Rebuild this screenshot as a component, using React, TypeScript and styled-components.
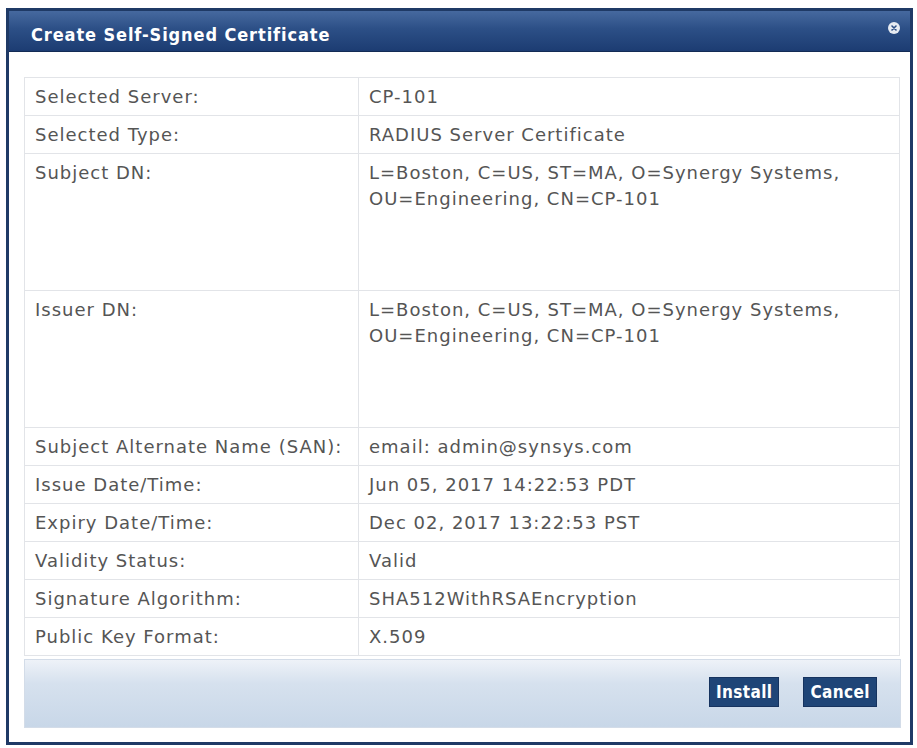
import React from 'react';
import styled, {createGlobalStyle} from 'styled-components';

const GlobalStyle = createGlobalStyle`
    html, body {
        margin: 0;
        padding: 0;
        background: #ffffff;
    }
    body {
        font-family: "DejaVu Sans", Verdana, sans-serif;
    }
`;

const Page = styled.div`
    padding: 8px 4px 0 6px;
`;

const Dialog = styled.div`
    display: flex;
    flex-direction: column;
    width: 907px;
    height: 737px;
    box-sizing: border-box;
    border: 3px solid #1f3a66;
    background: #ffffff;
`;

const Header = styled.div`
    display: flex;
    align-items: center;
    justify-content: space-between;
    height: 41px;
    padding: 0 10px 0 22px;
    background: linear-gradient(to bottom, #46699f 0%, #2c4f86 45%, #1c3c72 100%);
    border-bottom: 1px solid #132b55;
`;

const Title = styled.div`
    font-family: "DejaVu Sans Condensed", "DejaVu Sans", sans-serif;
    font-weight: bold;
    font-size: 18px;
    letter-spacing: 0.9px;
    color: #ffffff;
    margin-top: 6px;
`;

const CloseButton = styled.div`
    width: 12px;
    height: 12px;
    border-radius: 50%;
    background: #e6ebf2;
    display: flex;
    align-items: center;
    justify-content: center;
    align-self: flex-start;
    margin-top: 11px;
`;

const Body = styled.div`
    display: flex;
    flex-direction: column;
    flex: 1;
    padding: 25px 10px 14px 15px;
`;

const Table = styled.table`
    width: 876px;
    border-collapse: collapse;
    table-layout: fixed;
`;

const Cell = styled.td<{tall?: boolean}>`
    border: 1px solid #e2e4e8;
    padding: ${p => p.tall ? '6px 10px' : '0 10px'};
    height: ${p => p.tall ? '124px' : '37px'};
    vertical-align: ${p => p.tall ? 'top' : 'middle'};
    font-size: 18px;
    letter-spacing: 1px;
    line-height: 26px;
    color: #555555;
`;

const LabelCell = styled(Cell)`
    width: 321px;
    padding-right: 2px;
    white-space: nowrap;
`;

const Footer = styled.div`
    display: flex;
    justify-content: flex-end;
    align-items: center;
    gap: 24px;
    height: 69px;
    margin-top: 3px;
    width: 877px;
    box-sizing: border-box;
    padding: 0 23px 3px 0;
    background: linear-gradient(to bottom, #eef2f8 0%, #d6e1ee 35%, #c8d7e8 100%);
    border: 1px solid #d3dce8;
`;

const Button = styled.button`
    height: 30px;
    padding: 0 6px;
    border: 1px solid #16335f;
    background: #1f4577;
    color: #ffffff;
    font-family: "DejaVu Sans Condensed", "DejaVu Sans", sans-serif;
    font-weight: bold;
    font-size: 17px;
    letter-spacing: 0.4px;
    cursor: pointer;
`;

const rows: {label: string; value: string; tall?: boolean}[] = [
    {label: 'Selected Server:', value: 'CP-101'},
    {label: 'Selected Type:', value: 'RADIUS Server Certificate'},
    {label: 'Subject DN:', value: 'L=Boston, C=US, ST=MA, O=Synergy Systems, OU=Engineering, CN=CP-101', tall: true},
    {label: 'Issuer DN:', value: 'L=Boston, C=US, ST=MA, O=Synergy Systems, OU=Engineering, CN=CP-101', tall: true},
    {label: 'Subject Alternate Name (SAN):', value: 'email: admin@synsys.com'},
    {label: 'Issue Date/Time:', value: 'Jun 05, 2017 14:22:53 PDT'},
    {label: 'Expiry Date/Time:', value: 'Dec 02, 2017 13:22:53 PST'},
    {label: 'Validity Status:', value: 'Valid'},
    {label: 'Signature Algorithm:', value: 'SHA512WithRSAEncryption'},
    {label: 'Public Key Format:', value: 'X.509'},
];

export default function App() {
    return (
        <Page>
            <GlobalStyle/>
            <Dialog>
                <Header>
                    <Title>Create Self-Signed Certificate</Title>
                    <CloseButton>
                        <svg width="8" height="8" viewBox="0 0 8 8">
                            <path d="M2 2 L6 6 M6 2 L2 6" stroke="#2c4f86" strokeWidth="1.6" strokeLinecap="round"/>
                        </svg>
                    </CloseButton>
                </Header>
                <Body>
                    <Table>
                        <tbody>
                            {rows.map(r => (
                                <tr key={r.label}>
                                    <LabelCell tall={r.tall}>{r.label}</LabelCell>
                                    <Cell tall={r.tall}>{r.value}</Cell>
                                </tr>
                            ))}
                        </tbody>
                    </Table>
                    <Footer>
                        <Button>Install</Button>
                        <Button>Cancel</Button>
                    </Footer>
                </Body>
            </Dialog>
        </Page>
    );
}
